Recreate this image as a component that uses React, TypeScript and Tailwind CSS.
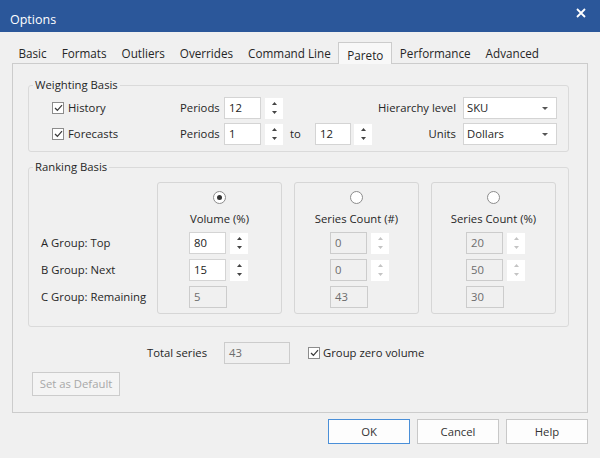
import React from 'react';

const TABS = ['Basic', 'Formats', 'Outliers', 'Overrides', 'Command Line', 'Pareto', 'Performance', 'Advanced'];

function CheckBox() {
  return (
    <span className="flex h-[12px] w-[12px] shrink-0 items-center justify-center border border-[#8c8c8c] bg-white">
      <svg width="9" height="8" viewBox="0 0 9 8">
        <path d="M1 4 L3.4 6.3 L8 1.2" fill="none" stroke="#3a3a3a" strokeWidth="1.2" />
      </svg>
    </span>
  );
}

function Spinner({ disabled = false }: { disabled?: boolean }) {
  const c = disabled ? '#c4c4c4' : '#444444';
  return (
    <span className="flex h-[21px] w-[18px] shrink-0 flex-col items-center justify-center gap-[6px] bg-white">
      <svg width="5" height="3" viewBox="0 0 5 3">
        <path d="M0 3 L2.5 0 L5 3 Z" fill={c} />
      </svg>
      <svg width="5" height="3" viewBox="0 0 5 3">
        <path d="M0 0 L2.5 3 L5 0 Z" fill={c} />
      </svg>
    </span>
  );
}

function Field({ value, disabled = false, className = 'w-[37px]' }: { value: string; disabled?: boolean; className?: string }) {
  return (
    <span
      className={`flex h-[22px] shrink-0 items-center border px-[4px] ${className} ${
        disabled ? 'border-[#cccccc] bg-[#f0f0f0] text-[#6d6d6d]' : 'border-[#d4d4d4] bg-white text-[#222222]'
      }`}
    >
      {value}
    </span>
  );
}

function Select({ value }: { value: string }) {
  return (
    <span className="flex h-[22px] w-[94px] items-center justify-between border border-[#d4d4d4] bg-white pl-[3px] pr-[8px]">
      <span>{value}</span>
      <svg width="6" height="3" viewBox="0 0 6 3">
        <path d="M0 0 L3 3 L6 0 Z" fill="#555555" />
      </svg>
    </span>
  );
}

function Radio({ checked = false }: { checked?: boolean }) {
  return (
    <span className="flex h-[13px] w-[13px] items-center justify-center rounded-full border border-[#8c8c8c] bg-white">
      {checked && <span className="h-[5px] w-[5px] rounded-full bg-[#333333]" />}
    </span>
  );
}

interface RankBox {
  title: string;
  checked: boolean;
  disabled: boolean;
  values: [string, string, string];
  inset: string;
}

const RANK_BOXES: RankBox[] = [
  { title: 'Volume (%)', checked: true, disabled: false, values: ['80', '15', '5'], inset: 'pl-[31px]' },
  { title: 'Series Count (#)', checked: false, disabled: true, values: ['0', '0', '43'], inset: 'pl-[35px]' },
  { title: 'Series Count (%)', checked: false, disabled: true, values: ['20', '50', '30'], inset: 'pl-[34px]' },
];

export default function App() {
  return (
    <div className="flex h-[458px] w-[600px] flex-col bg-[#f0f0f0] font-['Open_Sans','Noto_Sans',sans-serif] text-[11.3px] leading-[16px] text-[#262626]">
      {/* Title bar */}
      <header className="flex h-[32px] shrink-0 justify-between bg-[#2b579a] pl-[10px] pr-[14px] text-white">
        <span className="mt-[12px] text-[12.5px]">Options</span>
        <svg className="mt-[8px]" width="10" height="10" viewBox="0 0 10 10">
          <path d="M1 1 L9 9 M9 1 L1 9" stroke="#ffffff" strokeWidth="1.8" />
        </svg>
      </header>

      {/* Tabs */}
      <nav className="mt-[9px] flex h-[22px] items-end px-[11px] text-[11.7px]">
        {TABS.map((t) =>
          t === 'Pareto' ? (
            <span
              key={t}
              className="relative z-10 -mb-px flex h-[22px] items-center border border-b-0 border-[#cccccc] bg-[#f8f8f8] px-[8px] pt-[2px]"
            >
              {t}
            </span>
          ) : (
            <span key={t} className="flex h-[21px] items-center px-[7.5px]">
              {t}
            </span>
          ),
        )}
      </nav>

      {/* Tab page */}
      <section className="mx-[12px] flex h-[350px] shrink-0 flex-col border border-[#cccccc] bg-[#f0f0f0]">
        {/* Weighting Basis */}
        <fieldset className="ml-[15px] mt-[13px] w-[541px] rounded-[3px] border border-[#dadada] pb-[6px] pt-[4px]">
          <legend className="ml-[4px] px-[2px] leading-[16px]">Weighting Basis</legend>
          <div className="flex h-[22px] items-center pl-[23px]">
            <span className="flex w-[128px] items-center gap-[4px]">
              <CheckBox />
              History
            </span>
            <span className="w-[44px]">Periods</span>
            <Field value="12" />
            <span className="ml-[4px]">
              <Spinner />
            </span>
            <span className="ml-auto flex items-center gap-[7px] pr-[11px]">
              Hierarchy level
              <Select value="SKU" />
            </span>
          </div>
          <div className="mt-[4px] flex h-[22px] items-center pl-[23px]">
            <span className="flex w-[128px] items-center gap-[4px]">
              <CheckBox />
              Forecasts
            </span>
            <span className="w-[44px]">Periods</span>
            <Field value="1" />
            <span className="ml-[4px]">
              <Spinner />
            </span>
            <span className="ml-[7px] w-[25px]">to</span>
            <Field value="12" className="w-[36px]" />
            <span className="ml-[3px]">
              <Spinner />
            </span>
            <span className="ml-auto flex items-center gap-[7px] pr-[11px]">
              Units
              <Select value="Dollars" />
            </span>
          </div>
        </fieldset>

        {/* Ranking Basis */}
        <fieldset className="ml-[15px] mt-[7px] w-[541px] rounded-[3px] border border-[#dadada] pb-[12px] pt-[7px]">
          <legend className="ml-[4px] px-[2px] leading-[16px]">Ranking Basis</legend>
          <div className="flex pl-[12px]">
            <div className="flex w-[116px] flex-col gap-[5px] pt-[50px]">
              <span className="flex h-[22px] items-center">A Group: Top</span>
              <span className="flex h-[22px] items-center">B Group: Next</span>
              <span className="flex h-[22px] items-center">C Group: Remaining</span>
            </div>
            <div className="flex gap-[12px]">
              {RANK_BOXES.map((b) => (
                <div
                  key={b.title}
                  className="flex h-[132px] w-[125px] flex-col items-center rounded-[3px] border border-[#d6d6d6] pt-[8px]"
                >
                  <Radio checked={b.checked} />
                  <span className="mt-[7px]">{b.title}</span>
                  <div className={`mt-[5px] flex w-full flex-col gap-[5px] ${b.inset}`}>
                    <span className="flex items-center gap-[4px]">
                      <Field value={b.values[0]} disabled={b.disabled} />
                      <Spinner disabled={b.disabled} />
                    </span>
                    <span className="flex items-center gap-[4px]">
                      <Field value={b.values[1]} disabled={b.disabled} />
                      <Spinner disabled={b.disabled} />
                    </span>
                    <span className="flex items-center">
                      <Field value={b.values[2]} disabled className="w-[38px]" />
                    </span>
                  </div>
                </div>
              ))}
            </div>
          </div>
        </fieldset>

        {/* Totals */}
        <div className="mt-[15px] flex h-[22px] items-center pl-[134px]">
          <span className="w-[77px]">Total series</span>
          <Field value="43" disabled className="w-[66px]" />
          <span className="ml-[18px] flex items-center gap-[3px]">
            <CheckBox />
            Group zero volume
          </span>
        </div>

        <button
          type="button"
          className="ml-[19px] mt-[8px] flex h-[24px] w-[88px] items-center justify-center border border-[#cccccc] bg-[#f4f4f4] text-[#a8a8a8]"
        >
          Set as Default
        </button>
      </section>

      {/* Dialog buttons */}
      <footer className="mt-[6px] flex justify-end gap-[7px] pr-[12px]">
        <button type="button" className="h-[25px] w-[82px] border border-[#4a8fd8] bg-[#fdfdfd] text-[#333333]">
          OK
        </button>
        <button type="button" className="h-[25px] w-[82px] border border-[#c8c8c8] bg-[#fdfdfd] text-[#333333]">
          Cancel
        </button>
        <button type="button" className="h-[25px] w-[82px] border border-[#c8c8c8] bg-[#fdfdfd] text-[#333333]">
          Help
        </button>
      </footer>
    </div>
  );
}
